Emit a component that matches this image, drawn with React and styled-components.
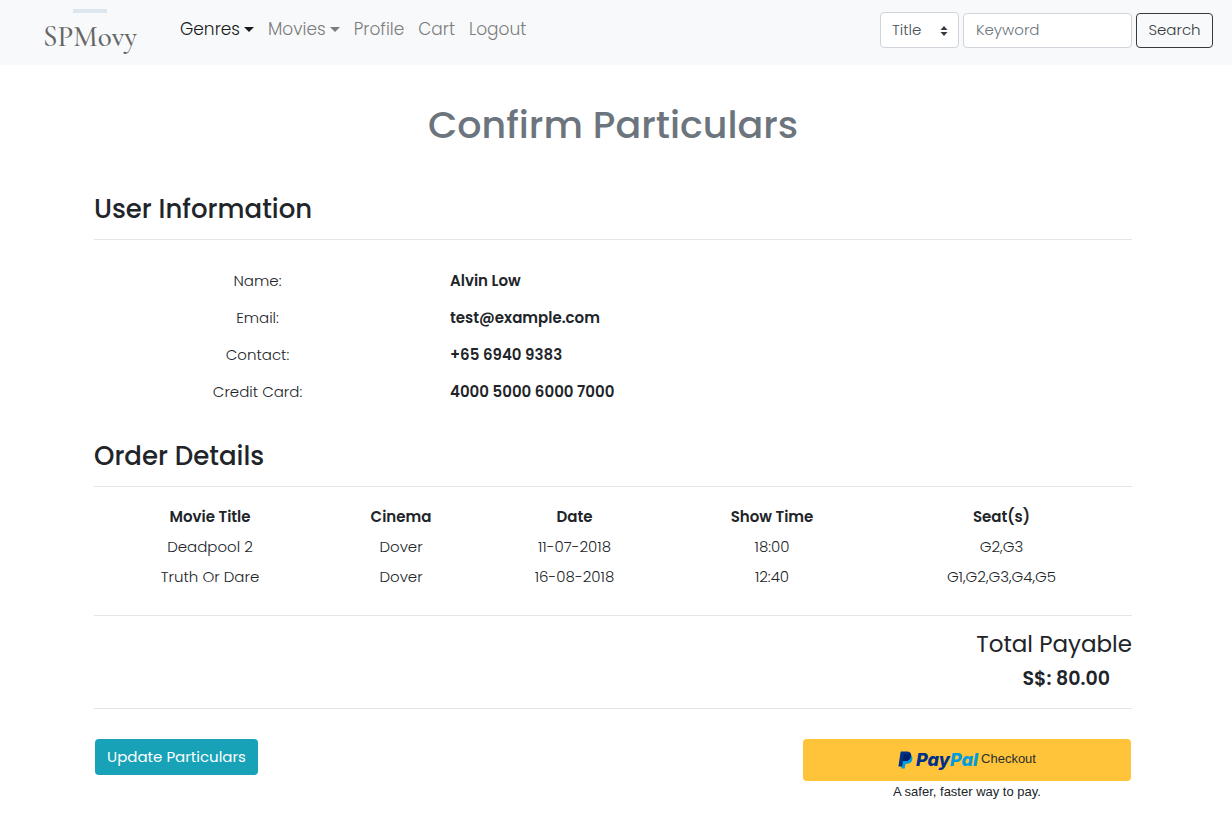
import React from "react";
import styled, { createGlobalStyle } from "styled-components";

const GlobalStyle = createGlobalStyle`
  *, *::before, *::after { box-sizing: border-box; }
  body {
    margin: 0;
    background: #fff;
    color: #212529;
    font-family: Poppins, Inter, "Liberation Sans", sans-serif;
    font-size: 15px;
    font-weight: 300;
    line-height: 24px;
  }
  button, input, select { font: inherit; }
`;

const Navbar = styled.nav`
  display: flex;
  align-items: flex-start;
  min-height: 65px;
  padding: 0 19px 0 42px;
  background: #f8f9fa;
`;

const Brand = styled.a`
  display: flex;
  flex-direction: column;
  align-items: center;
  width: 96px;
  margin-right: 42px;
  padding-top: 9px;
  color: #666;
  font-family: "Cormorant Garamond", Cormorant, "Liberation Serif", serif;
  font-size: 29px;
  font-weight: 500;
  line-height: 32px;
  text-decoration: none;
`;

const BrandBar = styled.span`
  width: 34px;
  height: 4px;
  margin-bottom: 8px;
  background: #dce8ed;
`;

const NavList = styled.ul`
  display: flex;
  flex: 1;
  gap: 14px;
  margin: 0;
  padding: 17px 0 0;
  list-style: none;
`;

const NavLink = styled.a`
  display: flex;
  align-items: center;
  gap: 4px;
  color: ${(p) => (p.$active ? "#1a1a1a" : "#7c7d7d")};
  font-size: 17px;
  text-decoration: none;
  white-space: nowrap;
`;

const Caret = styled.span`
  border: 5px solid transparent;
  border-top-color: currentColor;
  border-bottom: 0;
`;

const SearchForm = styled.form`
  display: flex;
  align-items: flex-end;
  gap: 4px;
  padding-top: 12px;
`;

const SelectWrap = styled.span`
  position: relative;
  display: flex;
`;

const FieldSelect = styled.select`
  width: 79px;
  height: 36px;
  padding: 0 11px;
  border: 1px solid #ced4da;
  border-radius: 4px;
  background: #fff;
  color: #495057;
  appearance: none;
`;

const SelectArrows = styled.svg`
  position: absolute;
  top: 14px;
  right: 11px;
  pointer-events: none;
`;

const KeywordInput = styled.input`
  width: 169px;
  height: 35px;
  padding: 0 12px 2px;
  border: 1px solid #ced4da;
  border-radius: 4px;
  background: #fff;
  color: #495057;
  &::placeholder { color: #6c757d; opacity: 1; }
`;

const SearchButton = styled.button`
  width: 77px;
  height: 35px;
  padding: 0 0 2px;
  border: 1px solid #343a40;
  border-radius: 4px;
  background: transparent;
  color: #343a40;
`;

const Main = styled.main`
  padding: 36px 100px 20px 94px;
`;

const Title = styled.h1`
  margin: 0 0 44px;
  color: #6c757d;
  font-size: 38px;
  font-weight: 500;
  line-height: 48px;
  text-align: center;
`;

const SectionTitle = styled.h2`
  margin: 0;
  padding-bottom: 14px;
  border-bottom: 1px solid #e5e5e5;
  font-size: 26px;
  font-weight: 500;
  line-height: 32px;
`;

const Details = styled.dl`
  display: grid;
  grid-template-columns: 327px 1fr;
  gap: 13px 29px;
  margin: 29px 0 36px;
`;

const Label = styled.dt`
  text-align: center;
`;

const Value = styled.dd`
  margin: 0;
  font-weight: 600;
`;

const OrderTable = styled.table`
  width: 100%;
  margin: 15px 0 23px;
  border-collapse: collapse;
  table-layout: fixed;
  text-align: center;
`;

const Column = styled.col`
  width: ${(p) => p.$share}px;
`;

const HeadCell = styled.th`
  padding: 3px 0;
  font-weight: 600;
`;

const Cell = styled.td`
  padding: 3px 0;
`;

const Total = styled.section`
  padding: 12px 0;
  border-top: 1px solid #e5e5e5;
  border-bottom: 1px solid #e5e5e5;
  text-align: right;
`;

const TotalLabel = styled.h3`
  margin: 0 0 2px;
  font-size: 23px;
  font-weight: 400;
  line-height: 32px;
`;

const TotalAmount = styled.p`
  margin: 0;
  padding-right: 22px;
  font-size: 19px;
  font-weight: 600;
  line-height: 34px;
`;

const Actions = styled.div`
  display: flex;
  align-items: flex-start;
  justify-content: space-between;
  padding: 30px 1px 0;
`;

const UpdateButton = styled.button`
  width: 163px;
  height: 36px;
  padding: 0;
  border: 0;
  border-radius: 4px;
  background: #17a2b8;
  color: #fff;
  font-weight: 400;
  white-space: nowrap;
`;

const PayPalBlock = styled.div`
  display: flex;
  flex-direction: column;
  gap: 1px;
  width: 328px;
  font-family: "Liberation Sans", sans-serif;
  font-size: 13px;
  font-weight: 400;
  line-height: 20px;
  text-align: center;
`;

const PayPalButton = styled.button`
  display: flex;
  align-items: center;
  justify-content: center;
  gap: 3px;
  height: 42px;
  padding: 0;
  border: 0;
  border-radius: 4px;
  background: #ffc439;
  color: #2c2e2f;
`;

const Wordmark = styled.span`
  color: #003087;
  font-family: Inter, "Liberation Sans", sans-serif;
  font-size: 18px;
  font-style: italic;
  font-weight: 800;
`;

const WordmarkEnd = styled.span`
  color: #009cde;
`;

const CheckoutText = styled.span`
  padding-bottom: 2px;
`;

const navItems = [
  { label: "Genres", active: true, menu: true },
  { label: "Movies", menu: true },
  { label: "Profile" },
  { label: "Cart" },
  { label: "Logout" },
];

const particulars = [
  ["Name:", "Alvin Low"],
  ["Email:", "test@example.com"],
  ["Contact:", "+65 6940 9383"],
  ["Credit Card:", "4000 5000 6000 7000"],
];

const columns = [
  ["Movie Title", 232],
  ["Cinema", 150],
  ["Date", 197],
  ["Show Time", 198],
  ["Seat(s)", 261],
];

const orders = [
  ["Deadpool 2", "Dover", "11-07-2018", "18:00", "G2,G3"],
  ["Truth Or Dare", "Dover", "16-08-2018", "12:40", "G1,G2,G3,G4,G5"],
];

function PayPalMark() {
  return (
    <svg width="15" height="18" viewBox="0 0 15 18" aria-hidden="true">
      <path d="M5 4h7.400c1.700.8 2.300 2.300 1.900 4.400-.6 3-2.600 4.400-5.600 4.400H7.500L6.700 17.600H3.200z" fill="#009cde" />
      <path d="M3.200.4h5.700c3 0 4.700 1.500 4.200 4.500-.5 3.300-2.600 5-6 5H5L4.100 15.500H.4L2.600 1z" fill="#003087" />
      <path d="M5.800 4.300c.1-.5.4-.7.900-.7h4.100c.9 0 1.600.1 2.200.4v.9c-.5 3.300-2.600 5-6 5H5z" fill="#012169" />
    </svg>
  );
}

export default function App() {
  return (
    <>
      <GlobalStyle />
      <Navbar>
        <Brand href="#">
          <BrandBar />
          SPMovy
        </Brand>
        <NavList>
          {navItems.map((item) => (
            <li key={item.label}>
              <NavLink href="#" $active={item.active}>
                {item.label}
                {item.menu && <Caret />}
              </NavLink>
            </li>
          ))}
        </NavList>
        <SearchForm onSubmit={(e) => e.preventDefault()}>
          <SelectWrap>
            <FieldSelect aria-label="Search by">
              <option>Title</option>
            </FieldSelect>
            <SelectArrows width="8" height="10" viewBox="0 0 8 10" aria-hidden="true">
              <path d="M4 0l3.500 4h-7zM4 10L.5 6h7z" fill="#343a40" />
            </SelectArrows>
          </SelectWrap>
          <KeywordInput type="text" placeholder="Keyword" aria-label="Keyword" />
          <SearchButton type="submit">Search</SearchButton>
        </SearchForm>
      </Navbar>
      <Main>
        <Title>Confirm Particulars</Title>
        <SectionTitle>User Information</SectionTitle>
        <Details>
          {particulars.map(([label, value]) => (
            <React.Fragment key={label}>
              <Label>{label}</Label>
              <Value>{value}</Value>
            </React.Fragment>
          ))}
        </Details>
        <SectionTitle>Order Details</SectionTitle>
        <OrderTable>
          <colgroup>
            {columns.map(([name, share]) => (
              <Column key={name} $share={share} />
            ))}
          </colgroup>
          <thead>
            <tr>
              {columns.map(([name]) => (
                <HeadCell key={name} scope="col">{name}</HeadCell>
              ))}
            </tr>
          </thead>
          <tbody>
            {orders.map((order) => (
              <tr key={order[0]}>
                {order.map((text, i) => (
                  <Cell key={columns[i][0]}>{text}</Cell>
                ))}
              </tr>
            ))}
          </tbody>
        </OrderTable>
        <Total>
          <TotalLabel>Total Payable</TotalLabel>
          <TotalAmount>S$: 80.00</TotalAmount>
        </Total>
        <Actions>
          <UpdateButton type="button">Update Particulars</UpdateButton>
          <PayPalBlock>
            <PayPalButton type="button">
              <PayPalMark />
              <Wordmark>
                Pay<WordmarkEnd>Pal</WordmarkEnd>
              </Wordmark>
              <CheckoutText>Checkout</CheckoutText>
            </PayPalButton>
            A safer, faster way to pay.
          </PayPalBlock>
        </Actions>
      </Main>
    </>
  );
}
